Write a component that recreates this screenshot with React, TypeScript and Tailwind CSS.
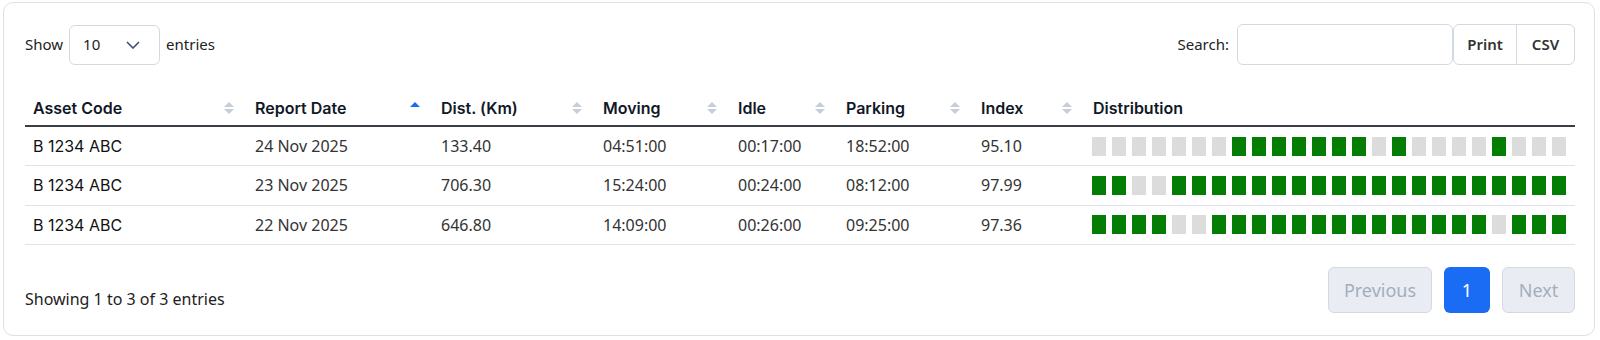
const COLUMNS = [
  { name: "Asset Code", width: 222, sort: "none" },
  { name: "Report Date", width: 186, sort: "asc" },
  { name: "Dist. (Km)", width: 162, sort: "none" },
  { name: "Moving", width: 135, sort: "none" },
  { name: "Idle", width: 108, sort: "none" },
  { name: "Parking", width: 135, sort: "none" },
  { name: "Index", width: 112, sort: "none" },
  { name: "Distribution", width: 490, sort: "off" },
];

// 1 = moving hour (green), 0 = nothing (grey)
const ROWS = [
  {
    asset: "B 1234 ABC",
    date: "24 Nov 2025",
    dist: "133.40",
    moving: "04:51:00",
    idle: "00:17:00",
    parking: "18:52:00",
    index: "95.10",
    dist24: "000000011111110100001000",
  },
  {
    asset: "B 1234 ABC",
    date: "23 Nov 2025",
    dist: "706.30",
    moving: "15:24:00",
    idle: "00:24:00",
    parking: "08:12:00",
    index: "97.99",
    dist24: "110011111111111111111111",
  },
  {
    asset: "B 1234 ABC",
    date: "22 Nov 2025",
    dist: "646.80",
    moving: "14:09:00",
    idle: "00:26:00",
    parking: "09:25:00",
    index: "97.36",
    dist24: "111100111111111111110111",
  },
];

const SortIcon = ({ state }: { state: string }) => {
  if (state === "off") return null;
  return (
    <svg width="12" height="14" viewBox="0 0 12 14" className="shrink-0">
      <polygon points="1,6 11,6 6,1" fill={state === "asc" ? "#1a6cf5" : "#c8ced8"} />
      {state !== "asc" && <polygon points="1,8 11,8 6,13" fill="#c8ced8" />}
    </svg>
  );
};

const App = () => {
  return (
    <div className="bg-white w-[1600px] h-[340px] pt-[2px] pl-[3px] font-['Noto_Sans',sans-serif]">
      <div className="w-[1592px] h-[334px] border border-[#dbe1ea] rounded-[10px] pt-[21px] pl-[21px] pr-[19px]">
        <div className="flex justify-between items-center h-[41px]">
          <div className="flex items-center text-[15px] text-[#222]">
            <span>Show</span>
            <div className="ml-[6px] mr-[6px] w-[91px] h-[40px] border border-[#d3d9e2] rounded-[6px] flex items-center justify-between pl-[13px] pr-[19px]">
              <span>10</span>
              <svg width="14" height="8" viewBox="0 0 14 8">
                <polyline points="1,1 7,7 13,1" fill="none" stroke="#3d4f6e" strokeWidth="1.6" />
              </svg>
            </div>
            <span>entries</span>
          </div>
          <div className="flex items-center text-[15px] text-[#222]">
            <span className="mr-[8px]">Search:</span>
            <div className="w-[216px] h-[41px] border border-[#d3d9e2] rounded-[6px]"></div>
            <div className="flex h-[41px] border border-[#d3d9e2] rounded-[6px] font-semibold text-[#333]">
              <div className="w-[63px] flex items-center justify-center border-r border-[#d3d9e2]">Print</div>
              <div className="w-[57px] flex items-center justify-center">CSV</div>
            </div>
          </div>
        </div>

        <table className="table-fixed border-collapse w-[1550px] mt-[25px]">
          <colgroup>
            {COLUMNS.map((c) => (
              <col key={c.name} style={{ width: c.width }} />
            ))}
          </colgroup>
          <thead>
            <tr className="border-b-2 border-[#3a3d44]">
              {COLUMNS.map((c) => (
                <th key={c.name} className="h-[36px] pl-[8px] pr-[12px] text-left align-middle">
                  <div className="flex items-center justify-between font-['Inter',sans-serif] font-semibold text-[16px] text-[#111827]">
                    <span>{c.name}</span>
                    <SortIcon state={c.sort} />
                  </div>
                </th>
              ))}
            </tr>
          </thead>
          <tbody>
            {ROWS.map((r, i) => (
              <tr key={i} className="border-b border-[#dde3ec]">
                <td className="h-[39.5px] pl-[8px] font-['Inter',sans-serif] text-[16px] text-[#111]">{r.asset}</td>
                <td className="pl-[8px] text-[16px] text-[#333]">{r.date}</td>
                <td className="pl-[8px] text-[16px] text-[#333]">{r.dist}</td>
                <td className="pl-[8px] text-[16px] text-[#333]">{r.moving}</td>
                <td className="pl-[8px] text-[16px] text-[#333]">{r.idle}</td>
                <td className="pl-[8px] text-[16px] text-[#333]">{r.parking}</td>
                <td className="pl-[8px] text-[16px] text-[#333]">{r.index}</td>
                <td className="pl-[7px]">
                  <div className="flex gap-[6px]">
                    {r.dist24.split("").map((v, j) => (
                      <div
                        key={j}
                        className={v === "1" ? "w-[14px] h-[19px] bg-[#037d03]" : "w-[14px] h-[19px] bg-[#dcdcdc]"}
                      />
                    ))}
                  </div>
                </td>
              </tr>
            ))}
          </tbody>
        </table>

        <div className="flex justify-between items-end mt-[22px]">
          <div className="text-[16px] text-[#222] mb-[2px]">Showing 1 to 3 of 3 entries</div>
          <div className="flex gap-[12px] text-[18px]">
            <div className="h-[46px] w-[104px] flex items-center justify-center rounded-[6px] border border-[#d3d9e2] bg-[#e9edf3] text-[#a3adbd]">
              Previous
            </div>
            <div className="h-[46px] w-[46px] flex items-center justify-center rounded-[6px] bg-[#1a6cf5] text-white">1</div>
            <div className="h-[46px] w-[73px] flex items-center justify-center rounded-[6px] border border-[#d3d9e2] bg-[#e9edf3] text-[#a3adbd]">
              Next
            </div>
          </div>
        </div>
      </div>
    </div>
  );
};

export default App;
